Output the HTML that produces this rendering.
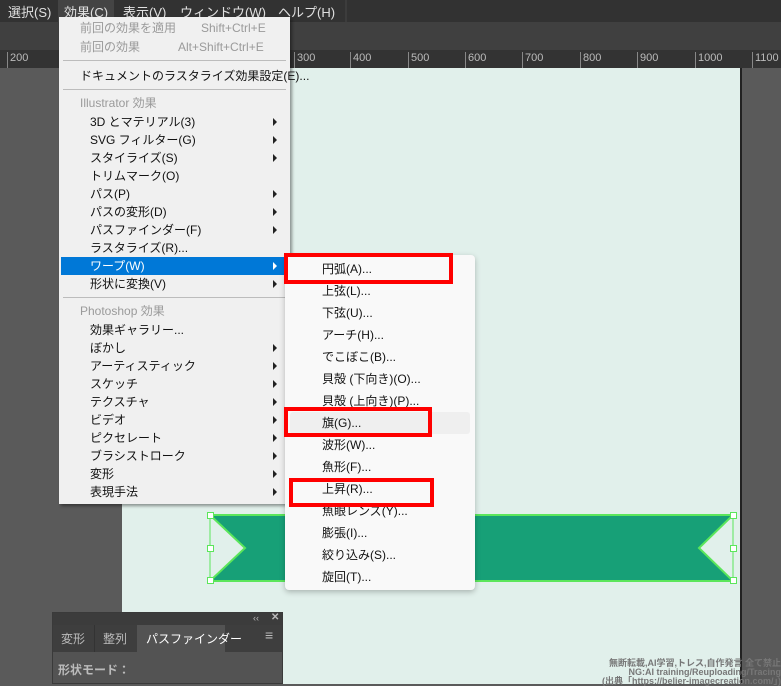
<!DOCTYPE html>
<html><head><meta charset="utf-8"><style>
*{margin:0;padding:0;box-sizing:border-box}
body{width:781px;height:684px;overflow:hidden;position:relative;background:#5a5a5a;font-family:"Liberation Sans","Noto Sans CJK JP",sans-serif;font-size:12px}
.a{position:absolute;white-space:nowrap}
#bar{left:0;top:0;width:781px;height:22px;background:#323232}
#bar span{position:absolute;top:2px;color:#e0e0e0;font-size:13px}
#tool{left:0;top:22px;width:781px;height:28px;background:#404040}
#ruler{left:0;top:50px;width:781px;height:18px;background:#333}
#ruler span{position:absolute;top:2px;color:#bbb;font-size:11px;border-left:1px solid #888;padding-left:2px;height:16px}
#art{left:122px;top:68px;width:618px;height:616px;background:#e1f0eb}
#menu{left:59px;top:17px;width:231px;height:487px;background:#f0f0f0;box-shadow:2px 2px 3px rgba(0,0,0,.4)}
.mi{position:absolute;left:31px;color:#111;line-height:18px;height:18px}
.dis{color:#9a9a9a}
.hd{left:21px;color:#9a9a9a}
.ar{position:absolute;left:214px;width:0;height:0;border-left:4px solid #222;border-top:4px solid transparent;border-bottom:4px solid transparent}
.sep{position:absolute;left:4px;width:223px;height:1px;background:#bcbcbc}
#sub{left:285px;top:255px;width:190px;height:335px;background:#f9f9f9;border-radius:4px;box-shadow:0 2px 6px rgba(0,0,0,.25)}
.si{position:absolute;left:37px;color:#111;line-height:22px}
.red{position:absolute;border:4px solid #f00}
#panel{left:52px;top:612px;width:231px;height:72px;background:#535353;border:1px solid #3a3a3a}
</style></head><body>
<div id="bar" class="a">
<span style="left:8px">選択(S)</span>
<div style="position:absolute;left:58px;top:0;width:56px;height:22px;background:#444"></div>
<span style="left:64px">効果(C)</span>
<span style="left:123px">表示(V)</span>
<span style="left:180px">ウィンドウ(W)</span>
<span style="left:278px">ヘルプ(H)</span>
<div style="position:absolute;left:345px;top:0;width:2px;height:22px;background:#3c3c3c"></div>
</div>
<div id="tool" class="a"></div>
<div id="ruler" class="a">
<span style="left:7px">200</span><span style="left:294px">300</span><span style="left:350px">400</span><span style="left:408px">500</span><span style="left:465px">600</span><span style="left:522px">700</span><span style="left:580px">800</span><span style="left:637px">900</span><span style="left:695px">1000</span><span style="left:752px">1100</span>
</div>
<div id="art" class="a"></div>
<div class="a" style="left:740px;top:68px;width:2px;height:616px;background:#222"></div>
<svg class="a" style="left:205px;top:510px" width="535" height="75">
<polygon points="5,5 528,5 494,38 528,71 5,71 40,38" fill="#17a077" stroke="#5be65b" stroke-width="2"/>
<rect x="5" y="5" width="523" height="66" fill="none" stroke="#5be65b" stroke-width="1"/>
<g fill="#fff" stroke="#5be65b"><rect x="2.5" y="2.5" width="6" height="6"/><rect x="525.5" y="2.5" width="6" height="6"/><rect x="2.5" y="35.5" width="6" height="6"/><rect x="525.5" y="35.5" width="6" height="6"/><rect x="2.5" y="67.5" width="6" height="6"/><rect x="525.5" y="67.5" width="6" height="6"/></g>
</svg>
<div id="menu" class="a">
<div class="mi dis" style="left:21px;top:2px">前回の効果を適用</div><div class="mi dis" style="left:142px;top:2px">Shift+Ctrl+E</div>
<div class="mi dis" style="left:21px;top:21px">前回の効果</div><div class="mi dis" style="left:119px;top:21px">Alt+Shift+Ctrl+E</div>
<div class="sep" style="top:43px"></div>
<div class="mi" style="left:21px;top:50px">ドキュメントのラスタライズ効果設定(E)...</div>
<div class="sep" style="top:72px"></div>
<div class="mi hd" style="top:77px">Illustrator 効果</div>
<div class="mi" style="top:96px">3D とマテリアル(3)</div><div class="ar" style="top:101px"></div>
<div class="mi" style="top:114px">SVG フィルター(G)</div><div class="ar" style="top:119px"></div>
<div class="mi" style="top:132px">スタイライズ(S)</div><div class="ar" style="top:137px"></div>
<div class="mi" style="top:150px">トリムマーク(O)</div>
<div class="mi" style="top:168px">パス(P)</div><div class="ar" style="top:173px"></div>
<div class="mi" style="top:186px">パスの変形(D)</div><div class="ar" style="top:191px"></div>
<div class="mi" style="top:204px">パスファインダー(F)</div><div class="ar" style="top:209px"></div>
<div class="mi" style="top:222px">ラスタライズ(R)...</div>
<div style="position:absolute;left:2px;top:240px;width:229px;height:18px;background:#0078d7"></div>
<div class="mi" style="top:240px;color:#fff">ワープ(W)</div><div class="ar" style="top:245px;border-left-color:#fff"></div>
<div class="mi" style="top:258px">形状に変換(V)</div><div class="ar" style="top:263px"></div>
<div class="sep" style="top:280px"></div>
<div class="mi hd" style="top:285px">Photoshop 効果</div>
<div class="mi" style="top:304px">効果ギャラリー...</div>
<div class="mi" style="top:322px">ぼかし</div><div class="ar" style="top:327px"></div>
<div class="mi" style="top:340px">アーティスティック</div><div class="ar" style="top:345px"></div>
<div class="mi" style="top:358px">スケッチ</div><div class="ar" style="top:363px"></div>
<div class="mi" style="top:376px">テクスチャ</div><div class="ar" style="top:381px"></div>
<div class="mi" style="top:394px">ビデオ</div><div class="ar" style="top:399px"></div>
<div class="mi" style="top:412px">ピクセレート</div><div class="ar" style="top:417px"></div>
<div class="mi" style="top:430px">ブラシストローク</div><div class="ar" style="top:435px"></div>
<div class="mi" style="top:448px">変形</div><div class="ar" style="top:453px"></div>
<div class="mi" style="top:466px">表現手法</div><div class="ar" style="top:471px"></div>
</div>
<div id="sub" class="a">
<div style="position:absolute;left:5px;top:157px;width:180px;height:22px;background:#efefef;border-radius:3px"></div>
<div class="si" style="top:3px">円弧(A)...</div>
<div class="si" style="top:25px">上弦(L)...</div>
<div class="si" style="top:47px">下弦(U)...</div>
<div class="si" style="top:69px">アーチ(H)...</div>
<div class="si" style="top:91px">でこぼこ(B)...</div>
<div class="si" style="top:113px">貝殻 (下向き)(O)...</div>
<div class="si" style="top:135px">貝殻 (上向き)(P)...</div>
<div class="si" style="top:157px">旗(G)...</div>
<div class="si" style="top:179px">波形(W)...</div>
<div class="si" style="top:201px">魚形(F)...</div>
<div class="si" style="top:223px">上昇(R)...</div>
<div class="si" style="top:245px">魚眼レンズ(Y)...</div>
<div class="si" style="top:267px">膨張(I)...</div>
<div class="si" style="top:289px">絞り込み(S)...</div>
<div class="si" style="top:311px">旋回(T)...</div>
</div>
<div class="red a" style="left:284px;top:253px;width:169px;height:31px"></div>
<div class="red a" style="left:284px;top:407px;width:148px;height:30px"></div>
<div class="red a" style="left:289px;top:478px;width:145px;height:29px"></div>
<div id="panel" class="a">
<div style="position:absolute;left:0;top:0;width:229px;height:12px;background:#3c3c3c"></div>
<div style="position:absolute;left:200px;top:0;color:#bbb;font-size:9px">‹‹</div>
<div style="position:absolute;left:218px;top:-1px;color:#bbb;font-size:10px;font-weight:bold">✕</div>
<div style="position:absolute;left:0;top:12px;width:229px;height:27px;background:#3e3e3e"></div>
<div style="position:absolute;left:8px;top:17px;color:#bbb">変形</div>
<div style="position:absolute;left:41px;top:12px;width:1px;height:27px;background:#333"></div>
<div style="position:absolute;left:50px;top:17px;color:#bbb">整列</div>
<div style="position:absolute;left:84px;top:12px;width:88px;height:28px;background:#535353"></div>
<div style="position:absolute;left:93px;top:17px;color:#fff">パスファインダー</div>
<div style="position:absolute;left:212px;top:14px;color:#bbb;font-size:14px">≡</div>
<div style="position:absolute;left:5px;top:48px;color:#bbb;font-weight:bold">形状モード：</div>
</div>
<div class="a" style="left:600px;top:659px;width:181px;color:#777;font-size:9px;line-height:9px;text-align:right;font-weight:bold">無断転載,AI学習,トレス,自作発言 全て禁止<br>NG:AI training/Reuploading/Tracing<br>(出典「https://belier-imagecreation.com/」)</div>
</body></html>
